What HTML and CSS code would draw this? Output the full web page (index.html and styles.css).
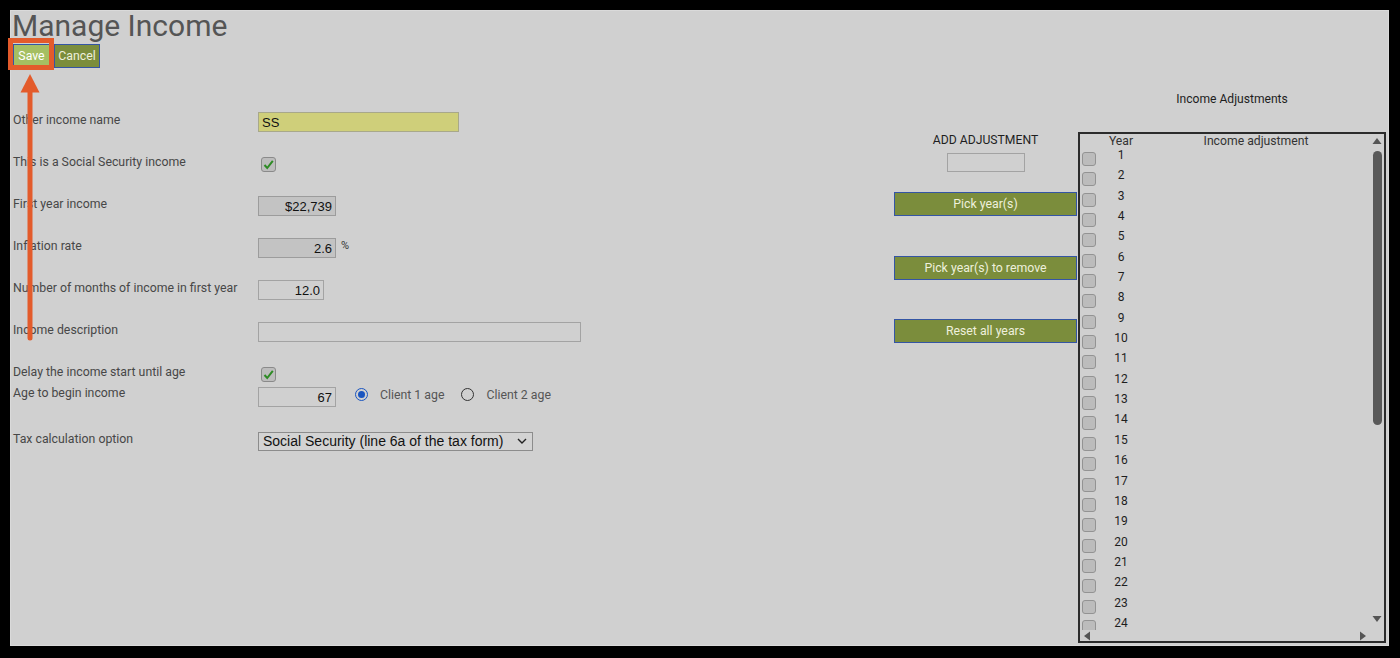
FILE: index.html
```html
<!DOCTYPE html>
<html lang="en">
<head>
    <meta charset="UTF-8">
    <title>Manage Income</title>
    <link rel="stylesheet" href="styles.css">
</head>
<body>
    <div class="frame">
        <h1 class="page-title">Manage Income</h1>
        <div class="toolbar">
            <button class="btn btn-save">Save</button>
            <button class="btn btn-cancel">Cancel</button>
        </div>

        <div class="content">
            <div class="form">
                <div class="form-row">
                    <div class="form-label">Other income name</div>
                    <input class="field field-name" type="text" value="SS">
                </div>
                <div class="form-row">
                    <div class="form-label">This is a Social Security income</div>
                    <span class="check">
                        <svg width="13" height="13" viewBox="0 0 13 13"><path d="M2.5 7 L5.2 10 L10.8 2.8" fill="none" stroke="#2e8b25" stroke-width="2"/></svg>
                    </span>
                </div>
                <div class="form-row">
                    <div class="form-label">First year income</div>
                    <input class="field field-num field-ro" type="text" value="$22,739">
                </div>
                <div class="form-row">
                    <div class="form-label">Inflation rate</div>
                    <input class="field field-num field-ro" type="text" value="2.6">
                    <span class="unit">%</span>
                </div>
                <div class="form-row">
                    <div class="form-label">Number of months of income in first year</div>
                    <input class="field field-num field-short" type="text" value="12.0">
                </div>
                <div class="form-row">
                    <div class="form-label">Income description</div>
                    <input class="field field-wide" type="text" value="">
                </div>
                <div class="form-row row-tight">
                    <div class="form-label">Delay the income start until age</div>
                    <span class="check">
                        <svg width="13" height="13" viewBox="0 0 13 13"><path d="M2.5 7 L5.2 10 L10.8 2.8" fill="none" stroke="#2e8b25" stroke-width="2"/></svg>
                    </span>
                </div>
                <div class="form-row row-age">
                    <div class="form-label label-age">Age to begin income</div>
                    <input class="field field-num" type="text" value="67">
                    <div class="radio-group">
                        <span class="radio radio-on"></span>
                        <span class="radio-label">Client 1 age</span>
                        <span class="radio"></span>
                        <span class="radio-label">Client 2 age</span>
                    </div>
                </div>
                <div class="form-row">
                    <div class="form-label">Tax calculation option</div>
                    <div class="select">
                        <span>Social Security (line 6a of the tax form)</span>
                        <svg width="10" height="6" viewBox="0 0 10 6"><path d="M1 1 L5 5 L9 1" fill="none" stroke="#222" stroke-width="1.4"/></svg>
                    </div>
                </div>
            </div>

            <div class="adjust">
                <div class="adjust-title">ADD ADJUSTMENT</div>
                <input class="adjust-input" type="text" value="">
                <button class="btn btn-wide btn-first">Pick year(s)</button>
                <button class="btn btn-wide">Pick year(s) to remove</button>
                <button class="btn btn-wide btn-last">Reset all years</button>
            </div>

            <div class="list-panel">
                <div class="list-title">Income Adjustments</div>
                <div class="listbox">
                    <div class="list-main">
                        <div class="list-view">
                            <div class="list-head">
                                <span class="col-chk"></span>
                                <span class="col-year">Year</span>
                                <span class="col-adj">Income adjustment</span>
                            </div>
                            <div class="list-row"><span class="col-chk"><i class="box"></i></span><span class="col-year">1</span></div>
                            <div class="list-row"><span class="col-chk"><i class="box"></i></span><span class="col-year">2</span></div>
                            <div class="list-row"><span class="col-chk"><i class="box"></i></span><span class="col-year">3</span></div>
                            <div class="list-row"><span class="col-chk"><i class="box"></i></span><span class="col-year">4</span></div>
                            <div class="list-row"><span class="col-chk"><i class="box"></i></span><span class="col-year">5</span></div>
                            <div class="list-row"><span class="col-chk"><i class="box"></i></span><span class="col-year">6</span></div>
                            <div class="list-row"><span class="col-chk"><i class="box"></i></span><span class="col-year">7</span></div>
                            <div class="list-row"><span class="col-chk"><i class="box"></i></span><span class="col-year">8</span></div>
                            <div class="list-row"><span class="col-chk"><i class="box"></i></span><span class="col-year">9</span></div>
                            <div class="list-row"><span class="col-chk"><i class="box"></i></span><span class="col-year">10</span></div>
                            <div class="list-row"><span class="col-chk"><i class="box"></i></span><span class="col-year">11</span></div>
                            <div class="list-row"><span class="col-chk"><i class="box"></i></span><span class="col-year">12</span></div>
                            <div class="list-row"><span class="col-chk"><i class="box"></i></span><span class="col-year">13</span></div>
                            <div class="list-row"><span class="col-chk"><i class="box"></i></span><span class="col-year">14</span></div>
                            <div class="list-row"><span class="col-chk"><i class="box"></i></span><span class="col-year">15</span></div>
                            <div class="list-row"><span class="col-chk"><i class="box"></i></span><span class="col-year">16</span></div>
                            <div class="list-row"><span class="col-chk"><i class="box"></i></span><span class="col-year">17</span></div>
                            <div class="list-row"><span class="col-chk"><i class="box"></i></span><span class="col-year">18</span></div>
                            <div class="list-row"><span class="col-chk"><i class="box"></i></span><span class="col-year">19</span></div>
                            <div class="list-row"><span class="col-chk"><i class="box"></i></span><span class="col-year">20</span></div>
                            <div class="list-row"><span class="col-chk"><i class="box"></i></span><span class="col-year">21</span></div>
                            <div class="list-row"><span class="col-chk"><i class="box"></i></span><span class="col-year">22</span></div>
                            <div class="list-row"><span class="col-chk"><i class="box"></i></span><span class="col-year">23</span></div>
                            <div class="list-row"><span class="col-chk"><i class="box"></i></span><span class="col-year">24</span></div>
                        </div>
                        <div class="vscroll">
                            <svg class="arrow" width="14" height="14" viewBox="0 0 14 14"><path d="M2.5 10 L7 4 L11.5 10 Z" fill="#555"/></svg>
                            <div class="thumb"></div>
                            <svg class="arrow arrow-down" width="14" height="14" viewBox="0 0 14 14"><path d="M2.5 4 L7 10 L11.5 4 Z" fill="#555"/></svg>
                        </div>
                    </div>
                    <div class="hscroll">
                        <svg width="14" height="14" viewBox="0 0 14 14"><path d="M10 2.5 L4 7 L10 11.5 Z" fill="#555"/></svg>
                        <svg width="14" height="14" viewBox="0 0 14 14"><path d="M4 2.5 L10 7 L4 11.5 Z" fill="#555"/></svg>
                    </div>
                </div>
            </div>
        </div>

        <!-- annotation: highlight + arrow pointing at Save -->
        <div class="mark-box"></div>
        <svg class="mark-arrow" width="30" height="276" viewBox="0 0 30 276">
            <path d="M15 4 L5.5 22.5 L24.5 22.5 Z" fill="#e35b2b"/>
            <line x1="15" y1="20" x2="15" y2="268" stroke="#e35b2b" stroke-width="5" stroke-linecap="round"/>
        </svg>
    </div>
</body>
</html>
```

FILE: styles.css
```css
* {
    margin: 0;
    padding: 0;
    box-sizing: border-box;
}

body {
    background-color: #000000;
    font-family: Roboto, 'Liberation Sans', sans-serif;
    overflow: hidden;
}

.frame {
    position: relative;
    margin: 10px 11px 12px 10px;
    height: 636px;
    background: #d0d0d0;
    box-shadow: inset 0 0 0 1px #dadada;
}

.page-title {
    font-size: 30px;
    line-height: 32px;
    font-weight: 400;
    color: #555555;
    padding-left: 2px;
}

.toolbar {
    display: flex;
    gap: 4px;
    margin-top: 2px;
    padding-left: 3px;
}

.btn {
    height: 24px;
    padding: 0;
    background: #7b8d3c;
    color: #eef0dc;
    border: 1px solid #3455a4;
    font-family: Roboto, 'Liberation Sans', sans-serif;
    font-size: 12.3px;
    cursor: pointer;
}

.btn-save {
    width: 37px;
    background: #a5bf62;
    color: #ffffff;
}

.btn-cancel {
    width: 46px;
}

.content {
    display: flex;
    align-items: flex-start;
    padding-right: 3px;
}

/* left form */

.form {
    flex: 1;
    padding-top: 44px;
    padding-left: 3px;
}

.form-row {
    display: flex;
    align-items: center;
    height: 20px;
    margin-bottom: 22px;
}

.form-row.row-tight {
    margin-bottom: 3px;
}

.form-row.row-age {
    margin-bottom: 24px;
}

.form-label {
    width: 245px;
    font-size: 12.3px;
    line-height: 16px;
    color: #474747;
    padding-bottom: 5px;
}

.form-label.label-age {
    padding-bottom: 8px;
}

.field {
    height: 20px;
    width: 78px;
    background: #d0d0d0;
    border: 1px solid #a3a3a3;
    font-family: 'Liberation Sans', Arial, sans-serif;
    font-size: 13px;
    color: #111111;
    padding: 0 3px;
    outline: none;
}

.field-name {
    width: 201px;
    background: #cfcf7a;
    border-color: #a8a88a;
}

.field-num {
    text-align: right;
}

.field-ro {
    background: #c3c3c3;
    border-color: #9c9c9c;
}

.field-short {
    width: 66px;
}

.field-wide {
    width: 323px;
}

.unit {
    align-self: flex-start;
    margin-left: 5px;
    font-size: 11px;
    line-height: 16px;
    color: #333333;
}

.check {
    display: flex;
    align-items: center;
    justify-content: center;
    width: 15px;
    height: 15px;
    margin-left: 3px;
    background: #bdbdbd;
    border: 1px solid #8a8a8a;
    border-radius: 3px;
}

.radio-group {
    display: flex;
    align-items: center;
    margin-left: 19px;
    padding-bottom: 5px;
}

.radio {
    display: flex;
    align-items: center;
    justify-content: center;
    width: 13px;
    height: 13px;
    border: 1.3px solid #333333;
    border-radius: 50%;
}

.radio-on {
    border: 1.6px solid #1a55c0;
}

.radio-on::after {
    content: "";
    width: 7px;
    height: 7px;
    border-radius: 50%;
    background: #1a55c0;
}

.radio-label {
    margin-left: 12px;
    margin-right: 17px;
    font-size: 12.3px;
    color: #555555;
}

.select {
    display: flex;
    align-items: center;
    justify-content: space-between;
    width: 275px;
    height: 19px;
    padding: 0 5px 0 4px;
    background: #d3d3d3;
    border: 1px solid #8c8c8c;
    font-family: 'Liberation Sans', Arial, sans-serif;
    font-size: 14px;
    color: #111111;
}

/* adjustment buttons */

.adjust {
    width: 184px;
    padding-top: 64px;
    padding-right: 1px;
    display: flex;
    flex-direction: column;
    align-items: center;
}

.adjust-title {
    font-size: 12.2px;
    line-height: 16px;
    color: #1e1e1e;
}

.adjust-input {
    width: 78px;
    height: 19px;
    margin-top: 5px;
    background: #d0d0d0;
    border: 1px solid #a3a3a3;
    outline: none;
}

.btn-wide {
    width: 183px;
    margin-top: 40px;
}

.btn-first {
    margin-top: 20px;
}

.btn-last {
    margin-top: 39px;
}

/* income adjustments list */

.list-panel {
    width: 308px;
    padding-top: 23px;
}

.list-title {
    font-size: 12.1px;
    line-height: 16px;
    text-align: center;
    color: #1e1e1e;
    margin-bottom: 25px;
}

.listbox {
    height: 511px;
    border: 2px solid #2b2b2b;
    display: flex;
    flex-direction: column;
}

.list-main {
    display: flex;
    height: 496px;
}

.list-view {
    flex: 1;
    overflow: hidden;
}

.list-head,
.list-row {
    display: flex;
    align-items: flex-start;
}

.list-head {
    height: 14px;
    font-size: 12.2px;
    line-height: 14px;
    color: #333333;
}

.list-row {
    height: 20.35px;
    font-size: 12px;
    line-height: 14px;
    color: #1e1e1e;
}

.col-chk {
    width: 20px;
}

.col-year {
    width: 42px;
    text-align: center;
}

.col-adj {
    flex: 1;
    text-align: center;
}

.box {
    display: block;
    width: 14px;
    height: 14px;
    margin: 4px 0 0 2px;
    background: #bcbcbc;
    border: 1px solid #939393;
    border-radius: 3px;
}

.vscroll {
    width: 14px;
    display: flex;
    flex-direction: column;
    align-items: center;
}

.vscroll .arrow {
    flex-shrink: 0;
}

.thumb {
    width: 9px;
    height: 274px;
    margin-top: 3px;
    margin-left: 1px;
    background: #595959;
    border-radius: 5px;
}

.arrow-down {
    margin-top: auto;
    margin-bottom: 4px;
}

.hscroll {
    height: 11px;
    display: flex;
    align-items: center;
    justify-content: space-between;
    padding-right: 14px;
}

.hscroll svg {
    flex-shrink: 0;
}

/* screenshot annotation */

.mark-box {
    position: absolute;
    left: -2px;
    top: 28px;
    width: 46px;
    height: 32px;
    border: 5px solid #e35b2b;
}

.mark-arrow {
    position: absolute;
    left: 5px;
    top: 60px;
}
```
